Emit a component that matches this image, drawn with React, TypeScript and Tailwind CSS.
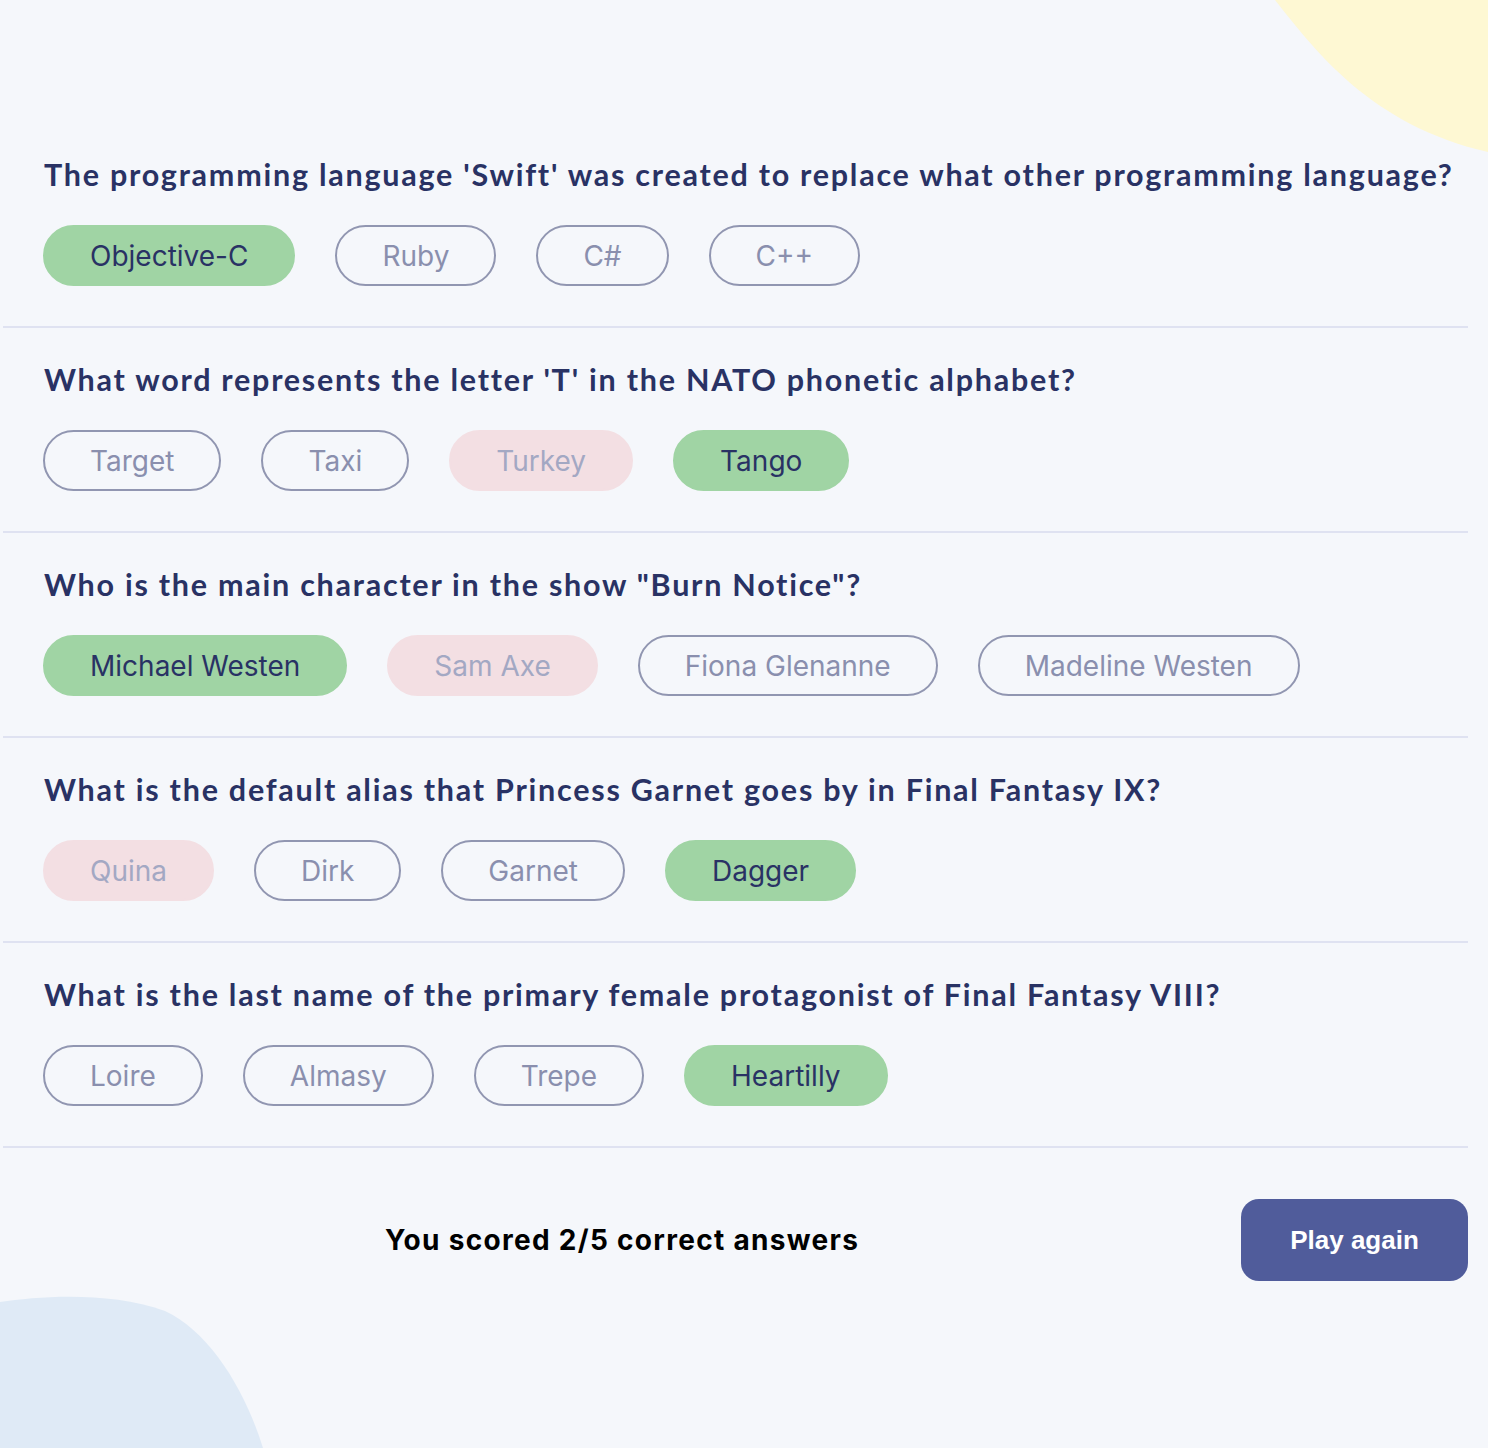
import React from "react";

type Ans = { text: string; state: "correct" | "wrong" | "none" };
type Q = { q: string; answers: Ans[] };

const data: Q[] = [
  {
    q: "The programming language 'Swift' was created to replace what other programming language?",
    answers: [
      { text: "Objective-C", state: "correct" },
      { text: "Ruby", state: "none" },
      { text: "C#", state: "none" },
      { text: "C++", state: "none" },
    ],
  },
  {
    q: "What word represents the letter 'T' in the NATO phonetic alphabet?",
    answers: [
      { text: "Target", state: "none" },
      { text: "Taxi", state: "none" },
      { text: "Turkey", state: "wrong" },
      { text: "Tango", state: "correct" },
    ],
  },
  {
    q: 'Who is the main character in the show "Burn Notice"?',
    answers: [
      { text: "Michael Westen", state: "correct" },
      { text: "Sam Axe", state: "wrong" },
      { text: "Fiona Glenanne", state: "none" },
      { text: "Madeline Westen", state: "none" },
    ],
  },
  {
    q: "What is the default alias that Princess Garnet goes by in Final Fantasy IX?",
    answers: [
      { text: "Quina", state: "wrong" },
      { text: "Dirk", state: "none" },
      { text: "Garnet", state: "none" },
      { text: "Dagger", state: "correct" },
    ],
  },
  {
    q: "What is the last name of the primary female protagonist of Final Fantasy VIII?",
    answers: [
      { text: "Loire", state: "none" },
      { text: "Almasy", state: "none" },
      { text: "Trepe", state: "none" },
      { text: "Heartilly", state: "correct" },
    ],
  },
];

function Pill({ a }: { a: Ans }) {
  const base =
    "h-[61px] px-[45px] rounded-full border-2 flex items-center text-[28px] font-[Inter,sans-serif] leading-none";
  if (a.state === "correct")
    return <div className={`${base} bg-[#A0D4A4] border-[#A0D4A4] text-[#293264]`}>{a.text}</div>;
  if (a.state === "wrong")
    return <div className={`${base} bg-[#F3DFE3] border-[#F3DFE3] text-[#A3A8C3]`}>{a.text}</div>;
  return <div className={`${base} border-[#9196B1] text-[#8A8FAE]`}>{a.text}</div>;
}

export default function App() {
  return (
    <div className="relative min-h-[1448px] w-full overflow-hidden bg-[#F5F7FB]">
      <svg className="absolute top-0 right-0" width="215" height="160" viewBox="1273 0 215 160">
        <path d="M1275 0 C1315 50, 1370 125, 1488 152 L1488 0 Z" fill="#FEF8D3" />
      </svg>
      <svg className="absolute left-0 bottom-0" width="270" height="160" viewBox="0 1288 270 160">
        <path d="M0 1302 C40 1296, 110 1291, 165 1311 C210 1332, 245 1390, 263 1448 L0 1448 Z" fill="#DFEAF6" />
      </svg>
      <div className="relative pt-[123px] pl-[3px] w-[1468px]">
        {data.map((item, i) => (
          <div key={i} className="h-[205px] border-b-2 border-[#DFE2F1] pl-[40px] pt-[32px]">
            <div className="pl-px text-[#293264] font-bold text-[30.5px] leading-[38px] tracking-[1.75px] whitespace-nowrap font-['Lato',sans-serif]">
              {item.q}
            </div>
            <div className="mt-[32px] flex gap-[40px]">
              {item.answers.map((a, j) => (
                <Pill key={j} a={a} />
              ))}
            </div>
          </div>
        ))}
        <div className="flex items-center pt-[51px]">
          <div className="flex-1 text-center text-black font-bold text-[28px] tracking-[1.3px] font-[Inter,sans-serif]">
            You scored 2/5 correct answers
          </div>
          <button className="h-[82px] w-[227px] rounded-[18px] bg-[#505C9B] text-white font-bold text-[26px] font-['Liberation_Sans',Arial,sans-serif]">
            Play again
          </button>
        </div>
      </div>
    </div>
  );
}
